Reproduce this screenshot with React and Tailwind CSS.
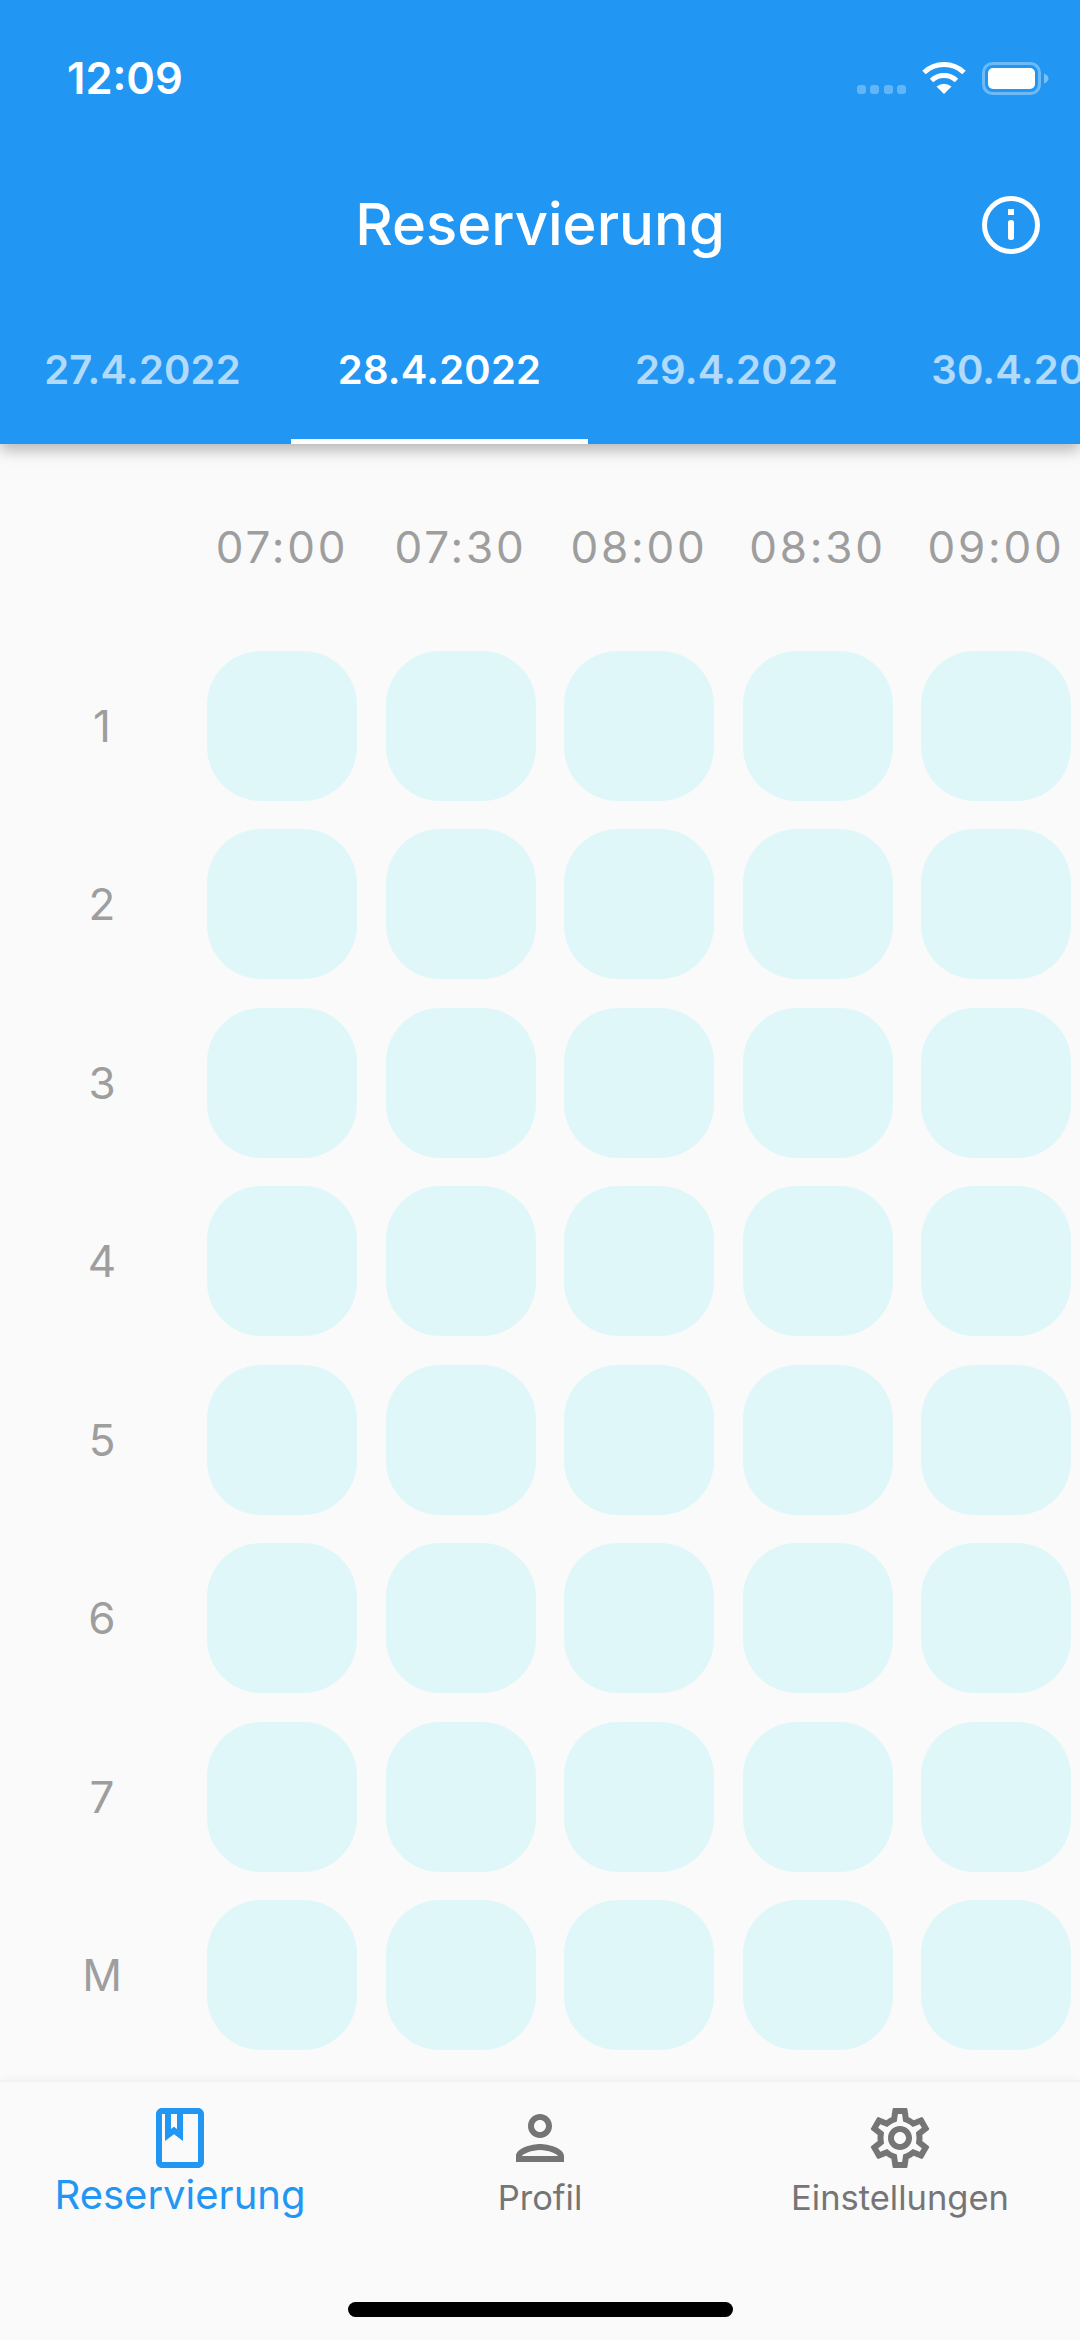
import React from "react";

const tabs = ["27.4.2022", "28.4.2022", "29.4.2022", "30.4.2022"];
const times = ["07:00", "07:30", "08:00", "08:30", "09:00"];
const rows = ["1", "2", "3", "4", "5", "6", "7", "M"];

const StatusIcons = () => (
  <div className="flex items-center">
    {/* signal dots */}
    <div className="flex gap-[4.5px] mt-[23px] mr-[16px]">
      <span className="w-[9px] h-[9px] rounded-[3px] bg-white/30"></span>
      <span className="w-[9px] h-[9px] rounded-[3px] bg-white/30"></span>
      <span className="w-[9px] h-[9px] rounded-[3px] bg-white/30"></span>
      <span className="w-[9px] h-[9px] rounded-[3px] bg-white/30"></span>
    </div>
    <svg width="44" height="32" viewBox="0 0 44 32" className="mr-[16px]">
      <path d="M2 10.5A29 29 0 0 1 42 10.5" fill="none" stroke="#fff" strokeWidth="5" />
      <path d="M9.5 18.5A18 18 0 0 1 34.5 18.5" fill="none" stroke="#fff" strokeWidth="5" />
      <path d="M22 32L14.5 24.5Q22 19 29.5 24.5Z" fill="#fff" />
    </svg>
    <svg width="67" height="33" viewBox="0 0 67 33">
      <rect x="1.5" y="1.5" width="56" height="30" rx="9" fill="none" stroke="#fff" strokeOpacity="0.35" strokeWidth="3" />
      <rect x="6" y="6" width="47" height="21" rx="5" fill="#fff" />
      <path d="M62 11.5c2.5.8 4.5 2.8 4.5 5s-2 4.200-4.500 5z" fill="#fff" fillOpacity="0.4" />
    </svg>
  </div>
);

const InfoIcon = () => (
  <svg width="58" height="58" viewBox="0 0 58 58" fill="none">
    <circle cx="29" cy="29" r="26.500" stroke="#fff" strokeWidth="5" />
    <rect x="26" y="13" width="6" height="6" fill="#fff" />
    <rect x="26" y="24" width="6" height="20" rx="2.500" fill="#fff" />
  </svg>
);

const BookIcon = () => (
  <svg width="72" height="72" viewBox="0 0 24 24" fill="#2196f3">
    <path d="M18 2H6c-1.100 0-2 .9-2 2v16c0 1.100.9 2 2 2h12c1.100 0 2-.9 2-2V4c0-1.100-.9-2-2-2zM9 4h2v5l-1-.75L9 9V4zm9 16H6V4h1v9l3-2.250L13 13V4h5v16z" />
  </svg>
);

const PersonIcon = () => (
  <svg width="72" height="72" viewBox="0 0 24 24" fill="#757575">
    <path d="M12 6c1.100 0 2 .9 2 2s-.9 2-2 2-2-.9-2-2 .9-2 2-2m0 10c2.700 0 5.800 1.290 6 2H6c.23-.72 3.310-2 6-2m0-12C9.790 4 8 5.790 8 8s1.790 4 4 4 4-1.790 4-4-1.790-4-4-4zm0 10c-2.670 0-8 1.340-8 4v2h16v-2c0-2.660-5.330-4-8-4z" />
  </svg>
);

const GearIcon = () => (
  <svg width="72" height="72" viewBox="0 0 24 24" fill="#757575">
    <path d="M19.430 12.980c.04-.32.07-.64.07-.98 0-.34-.03-.66-.07-.98l2.110-1.650c.19-.15.24-.42.12-.64l-2-3.460c-.09-.16-.26-.25-.44-.25-.06 0-.12.01-.17.03l-2.490 1c-.52-.4-1.080-.73-1.690-.98l-.38-2.650C14.460 2.180 14.250 2 14 2h-4c-.25 0-.46.18-.49.42l-.38 2.650c-.61.25-1.170.59-1.690.98l-2.490-1c-.06-.02-.12-.03-.18-.03-.17 0-.34.09-.43.25l-2 3.460c-.13.22-.07.49.12.64l2.110 1.650c-.04.32-.07.65-.07.98 0 .33.03.66.07.98l-2.110 1.650c-.19.15-.24.42-.12.64l2 3.460c.09.16.26.25.44.25.06 0 .12-.01.17-.03l2.490-1c.52.4 1.080.73 1.690.98l.38 2.650c.03.24.24.42.49.42h4c.25 0 .46-.18.49-.42l.38-2.650c.61-.25 1.170-.59 1.690-.98l2.490 1c.06.02.12.03.18.03.17 0 .34-.09.43-.25l2-3.460c.12-.22.07-.49-.12-.64l-2.110-1.650zm-1.980-1.710c.04.31.05.52.05.73 0 .21-.02.43-.05.73l-.14 1.130.89.7 1.080.84-.7 1.210-1.270-.51-1.040-.42-.9.68c-.43.32-.84.56-1.250.73l-1.060.43-.16 1.130-.2 1.350h-1.400l-.19-1.350-.16-1.130-1.060-.43c-.43-.18-.83-.41-1.230-.71l-.91-.7-1.060.43-1.270.51-.7-1.210 1.080-.84.89-.7-.14-1.130c-.03-.31-.05-.54-.05-.74s.02-.43.05-.73l.14-1.130-.89-.7-1.080-.84.7-1.210 1.270.51 1.040.42.9-.68c.43-.32.84-.56 1.250-.73l1.060-.43.16-1.130.2-1.350h1.390l.19 1.350.16 1.130 1.060.43c.43.18.83.41 1.230.71l.91.7 1.060-.43 1.270-.51.7 1.210-1.070.85-.89.7.14 1.130zM12 8c-2.210 0-4 1.790-4 4s1.790 4 4 4 4-1.790 4-4-1.790-4-4-4zm0 6c-1.100 0-2-.9-2-2s.9-2 2-2 2 .9 2 2-.9 2-2 2z" />
  </svg>
);

const App = () => {
  return (
    <div className="w-[1080px] h-[2340px] flex flex-col overflow-hidden bg-[#fafafa] font-['Inter',sans-serif]">
      {/* Header */}
      <div className="relative z-10 h-[444px] shrink-0 bg-[#2196f3] shadow-[0_6px_14px_rgba(0,0,0,0.28)] flex flex-col">
        <div className="h-[156px] pl-[67px] pr-[31px] flex items-center justify-between">
          <span className="text-white text-[43.5px] font-semibold pt-[2px]">12:09</span>
          <StatusIcons />
        </div>
        <div className="h-[140px] flex items-center justify-center relative">
          <span className="text-white text-[58px] font-medium pb-[3px]">Reservierung</span>
          <div className="absolute right-[40px] top-[40px]">
            <InfoIcon />
          </div>
        </div>
        {/* Tabs */}
        <div className="flex-1 flex -ml-[6px] overflow-hidden">
          {tabs.map((t, i) => (
            <div
              key={t}
              className={
                i === 1
                  ? "w-[297px] shrink-0 flex items-center justify-center pt-[5px] border-b-[5px] border-white text-white text-[40px] font-semibold tracking-[0.2px]"
                  : "w-[297px] shrink-0 flex items-center justify-center pt-[5px] border-b-[5px] border-transparent text-white/65 text-[40px] font-semibold tracking-[0.2px]"
              }
            >
              {t}
            </div>
          ))}
        </div>
      </div>

      {/* Table */}
      <div className="flex-1 pt-[28px] flex flex-col gap-[28.5px] overflow-hidden">
        <div className="flex h-[150px]">
          <div className="w-[207px] shrink-0"></div>
          <div className="flex gap-[28.5px]">
            {times.map((t) => (
              <div key={t} className="w-[150px] shrink-0 flex items-center justify-center text-[#9e9e9e] text-[44px] tracking-[2.8px]">
                {t}
              </div>
            ))}
          </div>
        </div>
        {rows.map((r) => (
          <div key={r} className="flex h-[150px]">
            <div className="w-[204px] mr-[3px] shrink-0 flex items-center justify-center text-[#9e9e9e] text-[44px]">
              {r}
            </div>
            <div className="flex gap-[28.5px]">
              {times.map((t) => (
                <div key={t} className="w-[150px] h-[150px] shrink-0 rounded-[54px] bg-[#e0f7fa]"></div>
              ))}
            </div>
          </div>
        ))}
      </div>

      {/* Bottom navigation */}
      <div className="h-[260px] shrink-0 bg-[#fafafa] border-t-2 border-[#f2f2f2] shadow-[0_-2px_6px_rgba(0,0,0,0.03)] flex flex-col">
        <div className="grid grid-cols-3 pt-[20px]">
          <div className="flex flex-col items-center">
            <BookIcon />
            <span className="text-[#2196f3] text-[40px] leading-[46px] -mt-[2px]">Reservierung</span>
          </div>
          <div className="flex flex-col items-center">
            <PersonIcon />
            <span className="text-[#757575] text-[34.5px] leading-[46px] mt-[1px]">Profil</span>
          </div>
          <div className="flex flex-col items-center">
            <GearIcon />
            <span className="text-[#757575] text-[34.5px] leading-[46px] mt-[1px]">Einstellungen</span>
          </div>
        </div>
        <div className="mt-auto mb-[23px] mx-auto w-[385px] h-[15px] rounded-full bg-black"></div>
      </div>
    </div>
  );
};

export default App;
